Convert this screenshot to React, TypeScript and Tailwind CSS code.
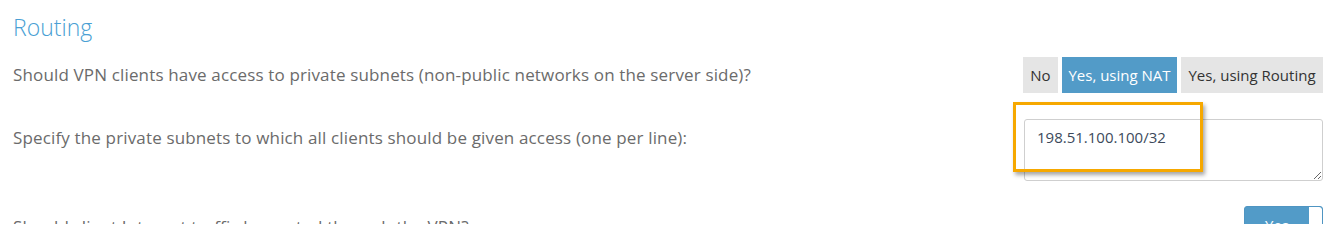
export default function App() {
  return (
    <div className="w-[1342px] h-[224px] overflow-hidden bg-white pl-[13px] pr-[19px] font-['Open_Sans',sans-serif]">
      <h2 className="pt-[13px] text-[23px] leading-[28px] font-light text-[#4a9fd4]">
        Routing
      </h2>

      <div className="mt-[16px] flex h-[36px] items-center justify-between">
        <p className="text-[17px] tracking-[0.15px] text-[#6b6b6b]">
          Should VPN clients have access to private subnets (non-public
          networks on the server side)?
        </p>
        <div className="flex gap-[4px] text-[15px]">
          <button className="h-[36px] w-[35px] bg-[#e5e5e5] text-[#333]">
            No
          </button>
          <button className="h-[36px] w-[115px] bg-[#529bc8] text-white">
            Yes, using NAT
          </button>
          <button className="h-[36px] w-[142px] bg-[#e5e5e5] text-[#333]">
            Yes, using Routing
          </button>
        </div>
      </div>

      <div className="mt-[26px] flex items-start justify-between">
        <p className="pt-[6px] text-[17px] tracking-[0.15px] text-[#6b6b6b]">
          Specify the private subnets to which all clients should be given
          access (one per line):
        </p>
        <div className="relative">
          <textarea
            readOnly
            defaultValue="198.51.100.100/32"
            className="block h-[62px] w-[299px] rounded-[3px] border border-[#cfcfcf] px-[12px] pt-[7px] text-[15px] leading-[20px] text-[#3c4a5b] outline-none"
          />
          <div className="pointer-events-none absolute left-[-11px] top-[-17px] h-[70px] w-[190px] border-[3px] border-[#f6a800] shadow-[2px_3px_4px_rgba(0,0,0,0.35)]" />
        </div>
      </div>

      <div className="mt-[25px] flex items-start justify-between">
        <p className="pt-[8px] text-[17px] tracking-[0.15px] text-[#6b6b6b]">
          Should client Internet traffic be routed through the VPN?
        </p>
        <div className="flex h-[34px] w-[79px] overflow-hidden rounded-[3px] border border-[#4f95c2] bg-[#529bc8]">
          <span className="flex-1 pt-[7px] text-center text-[15px] text-white">
            Yes
          </span>
          <span className="w-[13px] rounded-r-[3px] bg-white" />
        </div>
      </div>
    </div>
  );
}
